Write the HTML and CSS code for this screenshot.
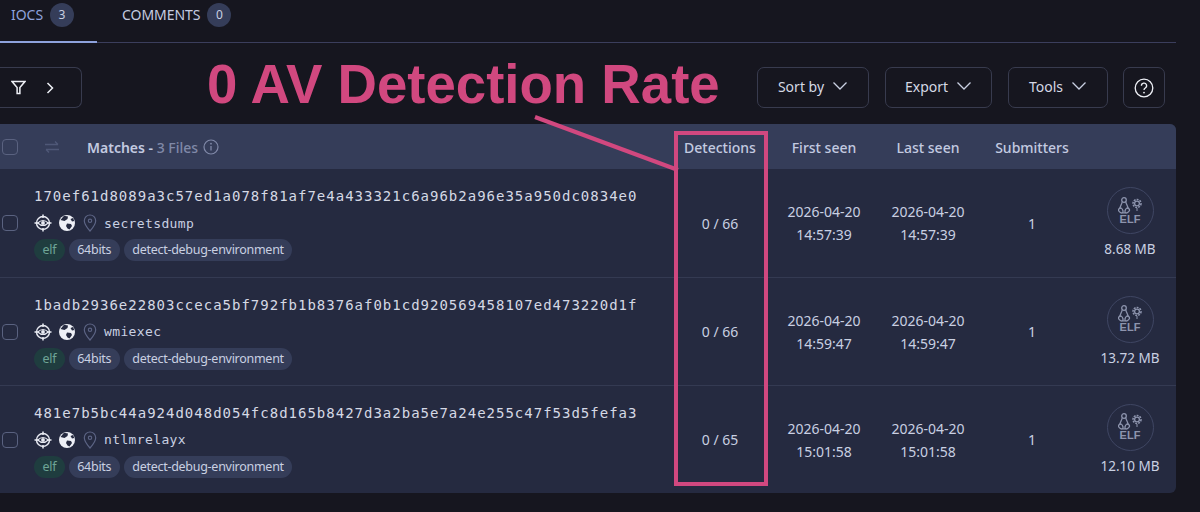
FILE: index.html
```html
<!DOCTYPE html>
<html lang="en">
<head>
<meta charset="utf-8">
<title>IOCs</title>
<link rel="stylesheet" href="styles.css">
</head>
<body>
<svg class="defs" aria-hidden="true">
  <symbol id="chev" viewBox="0 0 16 10"><path d="M1.500 1.500 8 8l6.500-6.500" fill="none" stroke="currentColor" stroke-width="1.300"/></symbol>
  <symbol id="target" viewBox="0 0 18 18">
    <path d="M9 .5v3.500M9 14v3.500M.5 9h3.500M14 9h3.500" stroke="currentColor" stroke-width="1.500" fill="none"/>
    <circle cx="9" cy="9" r="6.500" fill="none" stroke="currentColor" stroke-width="1.400"/>
    <path d="M3.800 9Q9 4 14.200 9 9 14 3.800 9Z" fill="none" stroke="currentColor" stroke-width="1.100"/>
    <circle cx="9" cy="9" r="1.900" fill="currentColor"/>
  </symbol>
  <symbol id="globe" viewBox="0 0 16 16">
    <circle cx="8" cy="8" r="8" fill="currentColor"/>
    <path d="M5 .8 9 1.500 8.500 4 5.500 6 3.500 5.500 1.500 5ZM8 8.500l4 .5 1 2-2.500 3.500-2-1L7 11ZM14 3l1.300 3-2.300.5L11.500 4Z" fill="#252a40"/>
  </symbol>
  <symbol id="pin" viewBox="0 0 14 18">
    <path d="M7 1a5.700 5.700 0 0 0-5.700 5.700C1.300 10.500 7 17 7 17s5.700-6.500 5.700-10.300A5.700 5.700 0 0 0 7 1Z" fill="none" stroke="currentColor" stroke-width="1.200"/>
    <circle cx="7" cy="6.800" r="1.700" fill="none" stroke="currentColor" stroke-width="1.100"/>
  </symbol>
  <symbol id="tux" viewBox="0 0 25 17">
    <g fill="none" stroke="currentColor" stroke-width="1.300">
      <circle cx="6" cy="3" r="2.300"/>
      <path d="M4.300 4.500C3.800 7.500 2 9 1.800 12M7.700 4.500C8.200 7.500 10 9 10.200 12"/>
      <path d="M3 11c-2.200 0-3 1.800-2.200 3S3.500 16.500 4.500 15.800 5 12 3 11ZM9 11c2.200 0 3 1.800 2.200 3S8.500 16.500 7.500 15.800 7 12 9 11Z"/>
      <path d="M4.500 15.800h3"/>
      <circle cx="19" cy="6.500" r="2.400"/>
      <circle cx="19" cy="6.500" r="4" stroke-width="1.600" stroke-dasharray="1.900 1.100"/>
      <path d="M19 11v3" stroke-width="1"/>
    </g>
  </symbol>
</svg>

<main class="page">
  <nav class="tabs">
    <a class="tab tab-active"><span>IOCS</span><span class="count">3</span></a>
    <a class="tab"><span>COMMENTS</span><span class="count">0</span></a>
  </nav>

  <div class="toolbar">
    <button class="btn btn-filter">
      <svg class="ico-filter" viewBox="0 0 14 14"><path d="M1 1.500h12L8.300 7v5.500H5.700V7Z" fill="none" stroke="currentColor" stroke-width="1.400"/></svg>
      <svg class="ico-right" viewBox="0 0 8 12"><path d="M1.500 1 6.500 6l-5 5" fill="none" stroke="currentColor" stroke-width="1.500"/></svg>
    </button>
    <div class="spacer"></div>
    <button class="btn btn-sort">Sort by <svg class="chev"><use href="#chev"/></svg></button>
    <button class="btn btn-export">Export <svg class="chev"><use href="#chev"/></svg></button>
    <button class="btn btn-tools">Tools <svg class="chev"><use href="#chev"/></svg></button>
    <button class="btn btn-help">
      <svg class="ico-help" viewBox="0 0 20 20"><circle cx="10" cy="10" r="8.800" fill="none" stroke="currentColor" stroke-width="1.300"/><path d="M7.400 7.800A2.600 2.600 0 1 1 11.300 10c-.9.500-1.300 1-1.300 2.100" fill="none" stroke="currentColor" stroke-width="1.300"/><circle cx="10" cy="14.600" r=".9" fill="currentColor"/></svg>
    </button>
  </div>

  <section class="table">
    <div class="row head">
      <div class="cell-main head-main">
        <span class="check"></span>
        <svg class="ico-swap" viewBox="0 0 16 14"><path d="M1 4.500h13M11 1.500l3 3M15 9.500H2M5 12.500l-3-3" fill="none" stroke="currentColor" stroke-width="1.300"/></svg>
        <span class="matches">Matches - <span class="muted">3 Files</span></span>
        <svg class="ico-info" viewBox="0 0 16 16"><circle cx="8" cy="8" r="7" fill="none" stroke="currentColor" stroke-width="1.200"/><path d="M8 7v4.500" stroke="currentColor" stroke-width="1.300"/><circle cx="8" cy="4.700" r=".9" fill="currentColor"/></svg>
      </div>
      <div class="col">Detections</div>
      <div class="col">First seen</div>
      <div class="col">Last seen</div>
      <div class="col">Submitters</div>
      <div class="col"></div>
    </div>

    <div class="row item">
      <div class="cell-main">
        <span class="check"></span>
        <div class="info">
          <div class="hash">170ef61d8089a3c57ed1a078f81af7e4a433321c6a96b2a96e35a950dc0834e0</div>
          <div class="name"><svg class="i-target"><use href="#target"/></svg><svg class="i-globe"><use href="#globe"/></svg><svg class="i-pin"><use href="#pin"/></svg><span class="fname">secretsdump</span></div>
          <div class="tags"><span class="tag tag-elf">elf</span><span class="tag">64bits</span><span class="tag">detect-debug-environment</span></div>
        </div>
      </div>
      <div class="col">0 / 66</div>
      <div class="col">2026-04-20<br>14:57:39</div>
      <div class="col">2026-04-20<br>14:57:39</div>
      <div class="col">1</div>
      <div class="col col-file"><div class="elf"><svg class="i-tux"><use href="#tux"/></svg><span class="elf-label">ELF</span></div><span>8.68 MB</span></div>
    </div>

    <div class="row item">
      <div class="cell-main">
        <span class="check"></span>
        <div class="info">
          <div class="hash">1badb2936e22803cceca5bf792fb1b8376af0b1cd920569458107ed473220d1f</div>
          <div class="name"><svg class="i-target"><use href="#target"/></svg><svg class="i-globe"><use href="#globe"/></svg><svg class="i-pin"><use href="#pin"/></svg><span class="fname">wmiexec</span></div>
          <div class="tags"><span class="tag tag-elf">elf</span><span class="tag">64bits</span><span class="tag">detect-debug-environment</span></div>
        </div>
      </div>
      <div class="col">0 / 66</div>
      <div class="col">2026-04-20<br>14:59:47</div>
      <div class="col">2026-04-20<br>14:59:47</div>
      <div class="col">1</div>
      <div class="col col-file"><div class="elf"><svg class="i-tux"><use href="#tux"/></svg><span class="elf-label">ELF</span></div><span>13.72 MB</span></div>
    </div>

    <div class="row item">
      <div class="cell-main">
        <span class="check"></span>
        <div class="info">
          <div class="hash">481e7b5bc44a924d048d054fc8d165b8427d3a2ba5e7a24e255c47f53d5fefa3</div>
          <div class="name"><svg class="i-target"><use href="#target"/></svg><svg class="i-globe"><use href="#globe"/></svg><svg class="i-pin"><use href="#pin"/></svg><span class="fname">ntlmrelayx</span></div>
          <div class="tags"><span class="tag tag-elf">elf</span><span class="tag">64bits</span><span class="tag">detect-debug-environment</span></div>
        </div>
      </div>
      <div class="col">0 / 65</div>
      <div class="col">2026-04-20<br>15:01:58</div>
      <div class="col">2026-04-20<br>15:01:58</div>
      <div class="col">1</div>
      <div class="col col-file"><div class="elf"><svg class="i-tux"><use href="#tux"/></svg><span class="elf-label">ELF</span></div><span>12.10 MB</span></div>
    </div>
  </section>
</main>

<div class="note-title">0 AV Detection Rate</div>
<div class="note-box"></div>
<svg class="note-line" viewBox="0 0 1200 512"><path d="M535 117 678 170"/></svg>
</body>
</html>
```

FILE: styles.css
```css
* { box-sizing: border-box; }
html, body { margin: 0; height: 512px; overflow: hidden; background: #16161f; }
body { font-family: "Noto Sans", "Open Sans", sans-serif; font-size: 14px; color: #c9d0e2; position: relative; }
.defs { width: 0; height: 0; position: absolute; }
.page { width: 1192px; margin-left: -16px; display: flex; flex-direction: column; }

.tabs { display: flex; height: 43px; padding-left: 2px; border-bottom: 1px solid #3b3e5c; }
.tab { display: flex; align-items: center; gap: 7px; height: 43px; padding: 0 23px 12px 25px; font-size: 14px; letter-spacing: -.05px; color: #c5cce0; border-bottom: 2px solid transparent; margin-bottom: -1px; }
.tab-active { color: #8ea2dd; border-bottom-color: #8ea2dd; }
.count { width: 24px; height: 24px; border-radius: 50%; background: #353d59; color: #c9d0e2; font-size: 12px; display: flex; align-items: center; justify-content: center; }

.toolbar { display: flex; gap: 16px; height: 41px; margin-top: 24px; padding-right: 11px; }
.spacer { flex: 1; }
.btn { height: 41px; background: transparent; border: 1px solid #383b4e; border-radius: 7px; color: #d5d9e5; font: inherit; font-size: 14px; display: flex; align-items: center; justify-content: center; padding: 0 0 2px; }
.btn-filter { width: 98px; gap: 20px; border-left: 0; color: #eef0f6; padding: 0; }
.btn-sort { width: 112px; }
.btn-export { width: 107px; }
.btn-tools { width: 100px; }
.btn-help { width: 42px; color: #eef0f6; margin-left: -1px; padding: 0; }
.chev { width: 16px; height: 10px; margin-left: 8px; margin-top: -2px; color: #c9d0e2; }
.ico-filter { width: 15px; height: 15px; }
.ico-right { width: 8px; height: 12px; }
.ico-help { width: 20px; height: 20px; }

.table { margin-top: 16px; width: 1192px; border-radius: 0 6px 6px 0; overflow: hidden; background: #252a40; }
.row { display: grid; grid-template-columns: 684px 104px 104px 104px 104px 92px; }
.col { display: flex; align-items: center; justify-content: center; text-align: center; font-size: 14px; line-height: 23px; }
.head { height: 45px; background: #353d59; font-weight: 500; color: #c3cae0; padding-top: 1px; }
.head .col { font-weight: 500; font-size: 14px; }
.cell-main { display: flex; align-items: center; padding-left: 18px; }
.check { flex: none; width: 16px; height: 16px; border: 1px solid #5a6280; border-radius: 4px; }
.ico-swap { width: 16px; height: 14px; margin-left: 26px; color: #4f5877; }
.matches { margin-left: 27px; font-size: 14px; font-weight: 600; color: #c3cae0; }
.muted { color: #8089a8; font-weight: 500; }
.ico-info { width: 16px; height: 16px; margin-left: 5px; color: #8089a8; }

.item { height: 108px; border-top: 1px solid #343a52; }
.head + .item { border-top: 0; }
.info { margin-left: 16px; padding-top: 1px; display: flex; flex-direction: column; }
.hash { font-family: "DejaVu Sans Mono", "Liberation Mono", monospace; font-size: 14px; letter-spacing: 1px; line-height: 20px; color: #d5d9e5; white-space: nowrap; }
.name { display: flex; align-items: center; height: 20px; margin-top: 7px; }
.i-target { width: 18px; height: 18px; color: #e8eaf2; }
.i-globe { width: 16px; height: 16px; color: #eef0f6; margin-left: 7px; }
.i-pin { width: 14px; height: 18px; color: #5c6484; margin-left: 8px; }
.fname { margin-left: 7px; font-family: "DejaVu Sans Mono", "Liberation Mono", monospace; font-size: 13px; letter-spacing: .37px; color: #c9d0e2; }
.tags { display: flex; gap: 4px; margin-top: 6px; }
.tag { height: 22px; padding: 0 8.500px; border-radius: 11px; background: #353d59; color: #c9d0e2; font-size: 12.500px; letter-spacing: -.28px; line-height: 22px; }
.tag-elf { background: #1f3d3f; color: #6ea596; }

.col-file { flex-direction: column; gap: 5px; font-size: 13.500px; line-height: 20px; }
.elf { width: 47px; height: 47px; border: 1px solid #3f4663; border-radius: 50%; display: flex; flex-direction: column; align-items: center; justify-content: center; color: #8d94ad; }
.i-tux { width: 25px; height: 17px; margin-left: 1px; }
.elf-label { font-family: "Liberation Sans", sans-serif; font-weight: 700; font-size: 11px; line-height: 11px; }

.note-title { position: absolute; left: 207px; top: 55px; font-family: "Liberation Sans", Arial, sans-serif; font-weight: 700; font-size: 54.600px; line-height: 60px; color: #d1487f; white-space: nowrap; }
.note-box { position: absolute; left: 674px; top: 131px; width: 94px; height: 355px; border: 4px solid #d1487f; }
.note-line { position: absolute; left: 0; top: 0; width: 1200px; height: 512px; }
.note-line path { stroke: #d1487f; stroke-width: 4; fill: none; }
```
